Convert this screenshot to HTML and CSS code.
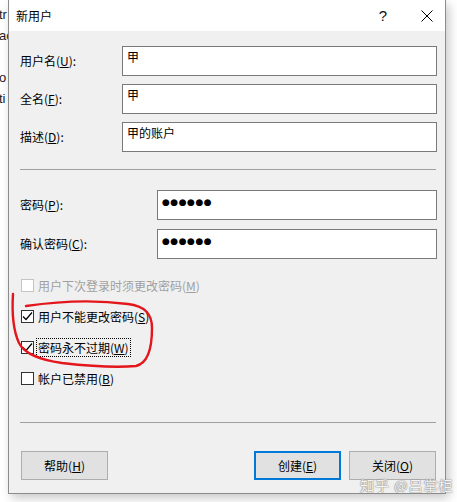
FILE: index.html
```html
<!DOCTYPE html>
<html lang="zh-CN">
<head>
    <meta charset="UTF-8">
    <meta name="viewport" content="width=device-width, initial-scale=1.0">
    <title>新用户</title>
    <link rel="stylesheet" href="styles.css">
</head>
<body>

<div class="desk">
    <span>tr</span>
    <span>ac</span>
    <span></span>
    <span>o</span>
    <span>ti</span>
</div>

<div class="dialog">
    <div class="titlebar">
        <span class="title">新用户</span>
        <span class="help">?</span>
        <svg class="close" width="12" height="12" viewBox="0 0 12 12">
            <path d="M0.5 0.5 L11.5 11.5 M11.5 0.5 L0.5 11.5" stroke="#000" stroke-width="1" fill="none"/>
        </svg>
    </div>

    <div class="content">
        <div class="fields names">
            <label>用户名(<u>U</u>):</label>
            <div class="input">甲</div>
            <label>全名(<u>F</u>):</label>
            <div class="input">甲</div>
            <label>描述(<u>D</u>):</label>
            <div class="input">甲的账户</div>
        </div>

        <div class="sep"></div>

        <div class="fields secret">
            <label>密码(<u>P</u>):</label>
            <div class="input dots">●●●●●●</div>
            <label>确认密码(<u>C</u>):</label>
            <div class="input dots">●●●●●●</div>
        </div>

        <div class="checks">
            <div class="check disabled">
                <span class="box"></span>
                <span class="text">用户下次登录时须更改密码(<u>M</u>)</span>
            </div>
            <div class="check">
                <span class="box"><svg width="11" height="11" viewBox="0 0 11 11"><path d="M1 5.5 L4 8.5 L10 1.5" stroke="#000" stroke-width="1.2" fill="none"/></svg></span>
                <span class="text">用户不能更改密码(<u>S</u>)</span>
            </div>
            <div class="check">
                <span class="box"><svg width="11" height="11" viewBox="0 0 11 11"><path d="M1 5.5 L4 8.5 L10 1.5" stroke="#000" stroke-width="1.2" fill="none"/></svg></span>
                <span class="text focus">密码永不过期(<u>W</u>)</span>
            </div>
            <div class="check">
                <span class="box"></span>
                <span class="text">帐户已禁用(<u>B</u>)</span>
            </div>
        </div>

        <div class="sep bottom"></div>

        <div class="buttons">
            <button class="btn">帮助(<u>H</u>)</button>
            <span class="spacer"></span>
            <button class="btn default">创建(<u>E</u>)</button>
            <button class="btn">关闭(<u>O</u>)</button>
        </div>
    </div>
</div>

<!-- hand drawn circle from the screenshot -->
<svg class="scribble" width="457" height="502" viewBox="0 0 457 502">
    <path d="M13 294 C12 310 13 330 19 343 C25 355 42 360 62 363 C88 366 116 368 136 366 C149 363 152 345 152 328 C152 314 145 306 128 304 C98 300 60 301 26 306"
          stroke="#e3161b" stroke-width="2.4" fill="none" stroke-linecap="round"/>
</svg>

<div class="watermark">知乎 @吕掌柜</div>

</body>
</html>
```

FILE: styles.css
```css
body {
    margin: 0;
    width: 457px;
    height: 502px;
    overflow: hidden;
    position: relative;
    background: #fff;
    font-family: "Noto Sans CJK SC", "Liberation Sans", sans-serif;
    font-size: 12px;
    color: #000;
}
.desk {
    display: flex;
    flex-direction: column;
    padding-top: 4px;
    font-family: "Liberation Sans", sans-serif;
    font-size: 13px;
    color: #222;
}
.desk span {
    height: 21px;
    line-height: 21px;
    margin-left: -1px;
}
.dialog {
    position: absolute;
    left: 8px;
    top: 0;
    width: 436px;
    height: 493px;
    border: 1px solid #8c8c8c;
    border-top: none;
    background: #f0f0f0;
    display: flex;
    flex-direction: column;
    box-shadow: 3px 4px 10px rgba(0, 0, 0, 0.22);
}
.titlebar {
    height: 31px;
    background: #fff;
    display: flex;
    align-items: center;
    padding-left: 7px;
}
.title { line-height: 16px; }
.help {
    margin-left: auto;
    margin-right: 34px;
    font-family: "Liberation Sans", sans-serif;
    font-size: 15px;
    line-height: 16px;
    color: #111;
}
.close { margin-right: 12px; }
.content {
    flex: 1;
    display: flex;
    flex-direction: column;
    padding: 15px 8px 13px 11px;
}
.fields {
    display: grid;
    align-items: center;
}
.names {
    grid-template-columns: 102px 1fr;
    grid-auto-rows: 30px;
    row-gap: 8px;
}
.secret {
    grid-template-columns: 137px 1fr;
    grid-auto-rows: 30px;
    row-gap: 9px;
}
.fields label { line-height: 16px; }
.input {
    height: 30px;
    box-sizing: border-box;
    border: 1px solid #7a7a7a;
    background: #fff;
    padding: 2px 4px 0;
    line-height: 16px;
}
.dots {
    font-family: "DejaVu Sans", sans-serif;
    font-size: 9px;
    letter-spacing: 0.5px;
    padding-top: 3px;
}
.sep {
    height: 1px;
    background: #a0a0a0;
    margin: 17px 1px 20px 0;
}
.checks {
    display: flex;
    flex-direction: column;
    gap: 10px;
    margin-top: 16px;
}
.check {
    height: 21px;
    display: flex;
    align-items: center;
    gap: 3px;
    margin-left: 1px;
}
.box {
    width: 11px;
    height: 11px;
    border: 1px solid #333;
    background: #fff;
    display: flex;
}
.text {
    line-height: 15px;
    padding: 1px;
}
.focus { outline: 1px dotted #000; outline-offset: 0; }
.disabled .box { border-color: #c4c4c4; }
.disabled .text { color: #a0a0a0; }
.sep.bottom {
    margin: auto 1px 28px 0;
}
.buttons {
    display: flex;
    gap: 8px;
    padding-left: 1px;
    padding-right: 1px;
}
.spacer { flex: 1; }
.btn {
    width: 87px;
    height: 29px;
    box-sizing: border-box;
    border: 1px solid #adadad;
    background: #e1e1e1;
    font-family: inherit;
    font-size: 12px;
    color: #000;
    padding: 0;
    line-height: 16px;
}
.btn.default { border: 2px solid #0078d7; }
.scribble {
    position: absolute;
    left: 0;
    top: 0;
    pointer-events: none;
}
.watermark {
    position: absolute;
    left: 360px;
    top: 477px;
    font-size: 14px;
    line-height: 16px;
    color: rgba(255, 255, 255, 0.92);
    text-shadow: 0 0 1px #8a8a8a, 0 0 1px #8a8a8a, 0 0 2px #aaa;
    letter-spacing: 1px;
}
```
